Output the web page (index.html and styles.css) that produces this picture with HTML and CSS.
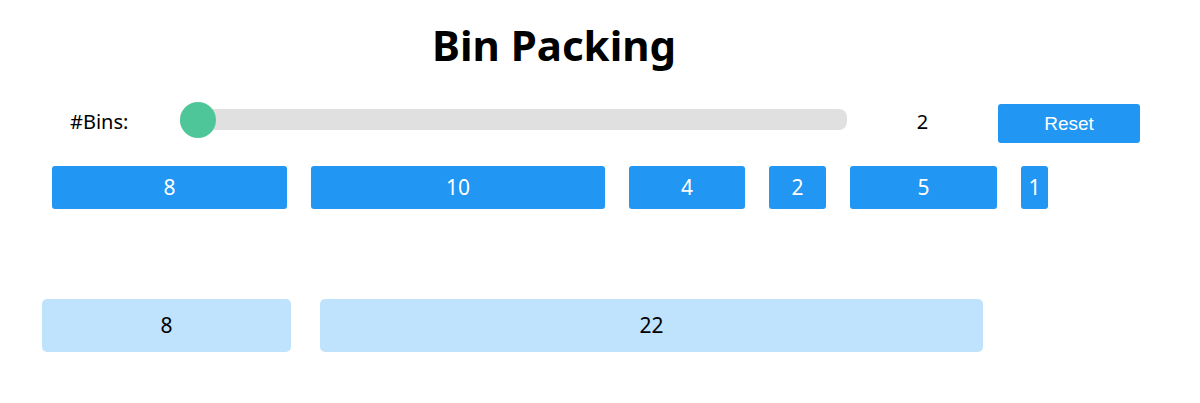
FILE: index.html
```html
<!DOCTYPE html>
<html lang="en">
<head>
  <meta charset="UTF-8" />
  <meta name="viewport" content="width=device-width, initial-scale=1.0"/>
  <title>Bin Packing</title>
  <link rel="stylesheet" href="styles.css">
</head>
<body>

  <h1 class="title">Bin Packing</h1>

  <div class="controls">
    <label class="bins-label" for="binCount">#Bins:</label>
    <input class="slider" id="binCount" type="range" min="2" max="10" value="2">
    <span class="bins-value" id="binValue">2</span>
    <button class="reset-btn">Reset</button>
  </div>

  <div class="items">
    <div class="item" style="width: 235px">8</div>
    <div class="item" style="width: 294px">10</div>
    <div class="item" style="width: 116px">4</div>
    <div class="item" style="width: 57px">2</div>
    <div class="item" style="width: 147px">5</div>
    <div class="item" style="width: 27px">1</div>
  </div>

  <div class="bins">
    <div class="bin" style="width: 249px">8</div>
    <div class="bin" style="width: 663px">22</div>
  </div>

</body>
</html>
```

FILE: styles.css
```css
body {
  margin: 0;
  padding: 0;
  font-family: 'Noto Sans', 'Open Sans', sans-serif;
  background: #fff;
  color: #000;
}

.title {
  margin: 21px 0 0;
  font-size: 42px;
  line-height: 48px;
  font-weight: bold;
  text-align: center;
  padding-right: 92px;
}

/* slider + reset */
.controls {
  display: flex;
  align-items: flex-start;
  margin-top: 32px;
  padding-left: 70px;
  height: 42px;
}

.bins-label {
  width: 110px;
  font-size: 20px;
  line-height: 42px;
}

.slider {
  -webkit-appearance: none;
  appearance: none;
  margin: 0;
  width: 667px;
  height: 36px;
  background: transparent;
  cursor: pointer;
}

.slider::-webkit-slider-runnable-track {
  height: 21px;
  background: #e0e0e0;
  border-radius: 8px;
}

.slider::-webkit-slider-thumb {
  -webkit-appearance: none;
  appearance: none;
  width: 36px;
  height: 36px;
  margin-top: -7px;
  border-radius: 50%;
  background: #4fc59a;
  border: none;
}

.bins-value {
  width: 151px;
  text-align: center;
  font-size: 20px;
  line-height: 42px;
}

.reset-btn {
  margin-top: 3px;
  width: 142px;
  height: 39px;
  background: #2196f3;
  color: #fff;
  border: none;
  border-radius: 3px;
  font-family: 'Liberation Sans', Arial, sans-serif;
  font-size: 19px;
  cursor: pointer;
}

.reset-btn:hover {
  background: #1e88e5;
}

/* items to pack */
.items {
  display: flex;
  gap: 24px;
  margin-top: 23px;
  padding-left: 52px;
}

.item {
  height: 43px;
  line-height: 43px;
  text-align: center;
  background: #2196f3;
  color: #fff;
  border-radius: 3px;
  font-size: 21px;
}

/* bins */
.bins {
  display: flex;
  gap: 29px;
  margin-top: 90px;
  padding-left: 42px;
}

.bin {
  height: 53px;
  line-height: 53px;
  text-align: center;
  background: #bfe3fd;
  border-radius: 5px;
  font-size: 21px;
}
```
